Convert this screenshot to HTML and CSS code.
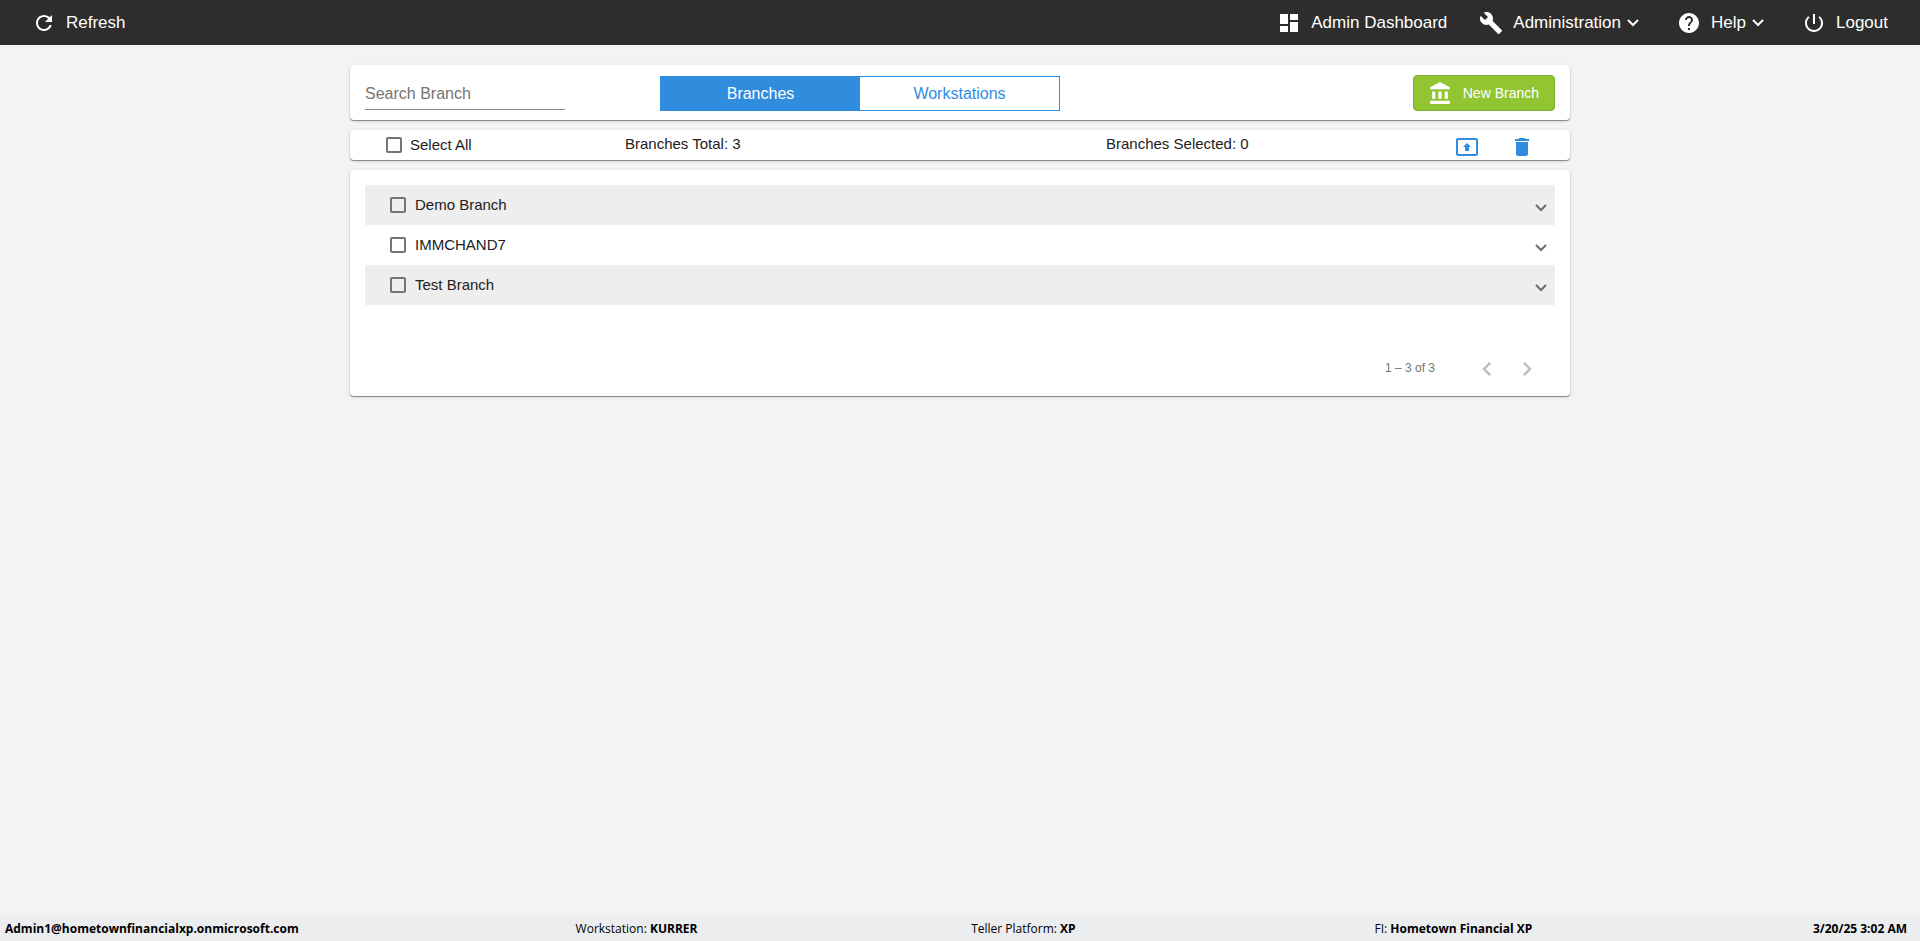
FILE: index.html
```
<!DOCTYPE html>
<html lang="en">
  <head>
    <meta charset="UTF-8" />
    <title>Branches</title>
    <link rel="stylesheet" href="styles.css">
  </head>
  <body>
    <header class="topbar">
      <button type="button" class="nav-item">
        <svg class="nav-icon" viewBox="0 0 24 24"><path d="M17.65 6.35C16.2 4.9 14.21 4 12 4c-4.42 0-7.99 3.58-7.99 8s3.57 8 7.99 8c3.73 0 6.84-2.55 7.73-6h-2.08c-.82 2.33-3.04 4-5.65 4-3.31 0-6-2.69-6-6s2.69-6 6-6c1.66 0 3.14.69 4.22 1.78L13 11h7V4l-2.35 2.35z"/></svg>
        Refresh
      </button>
      <nav class="nav">
        <a href="#dashboard" class="nav-item nav-dashboard">
          <svg class="nav-icon" viewBox="0 0 24 24"><path d="M3 13h8V3H3v10zm0 8h8v-6H3v6zm10 0h8V11h-8v10zm0-18v6h8V3h-8z"/></svg>
          Admin Dashboard
        </a>
        <button type="button" class="nav-item nav-administration">
          <svg class="nav-icon" viewBox="0 0 24 24"><path d="M22.7 19l-9.1-9.1c.9-2.3.4-5-1.5-6.9-2-2-5-2.4-7.4-1.3L9 6 6 9 1.6 4.7C.4 7.1.9 10.1 2.9 12.1c1.9 1.9 4.6 2.4 6.9 1.5l9.1 9.1c.4.4 1 .4 1.4 0l2.3-2.3c.5-.4.5-1.1.1-1.4z"/></svg>
          Administration
          <svg class="nav-arrow" viewBox="0 0 12 8"><path d="M1 1l5 5 5-5"/></svg>
        </button>
        <button type="button" class="nav-item nav-help">
          <svg class="nav-icon" viewBox="0 0 24 24"><path d="M12 2C6.48 2 2 6.48 2 12s4.48 10 10 10 10-4.48 10-10S17.52 2 12 2zm1 17h-2v-2h2v2zm2.07-7.75l-.9.92C13.45 12.9 13 13.5 13 15h-2v-.5c0-1.1.45-2.1 1.17-2.83l1.24-1.26c.37-.36.59-.86.59-1.41 0-1.1-.9-2-2-2s-2 .9-2 2H8c0-2.21 1.79-4 4-4s4 1.79 4 4c0 .88-.36 1.68-.93 2.25z"/></svg>
          Help
          <svg class="nav-arrow" viewBox="0 0 12 8"><path d="M1 1l5 5 5-5"/></svg>
        </button>
        <button type="button" class="nav-item">
          <svg class="nav-icon" viewBox="0 0 24 24"><path d="M13 3h-2v10h2V3zm4.83 2.17l-1.42 1.42C17.99 7.86 19 9.81 19 12c0 3.87-3.13 7-7 7s-7-3.13-7-7c0-2.19 1.01-4.14 2.58-5.42L6.17 5.17C4.23 6.82 3 9.26 3 12c0 4.97 4.03 9 9 9s9-4.03 9-9c0-2.74-1.23-5.18-3.17-6.83z"/></svg>
          Logout
        </button>
      </nav>
    </header>

    <main class="content">
      <section class="card toolbar">
        <input type="text" class="search" placeholder="Search Branch" aria-label="Search Branch" />
        <div class="toggle">
          <button type="button" class="toggle-btn active">Branches</button>
          <button type="button" class="toggle-btn">Workstations</button>
        </div>
        <button type="button" class="new-branch">
          <svg class="new-branch-icon" viewBox="0 0 24 24"><path d="M4 10v7h3v-7H4zm6 0v7h3v-7h-3zM2 22h19v-3H2v3zm14-12v7h3v-7h-3zm-4.500-9L2 6v2h19V6l-9.500-5z"/></svg>
          New Branch
        </button>
      </section>

      <section class="card summary">
        <label class="check"><input type="checkbox" /><span>Select All</span></label>
        <span class="total">Branches Total: 3</span>
        <span class="selected">Branches Selected: 0</span>
        <div class="actions">
          <button type="button" class="icon-btn" aria-label="Export">
            <svg viewBox="0 0 24 24"><path d="M21 3H3c-1.110 0-2 .89-2 2v14c0 1.110.89 2 2 2h18c1.110 0 2-.89 2-2V5c0-1.110-.89-2-2-2zm0 16.020H3V4.980h18v14.040zM10 12H8l4-4 4 4h-2v4h-4v-4z"/></svg>
          </button>
          <button type="button" class="icon-btn" aria-label="Delete">
            <svg viewBox="0 0 24 24"><path d="M6 19c0 1.100.9 2 2 2h8c1.100 0 2-.9 2-2V7H6v12zM19 4h-3.500l-1-1h-5l-1 1H5v2h14V4z"/></svg>
          </button>
        </div>
      </section>

      <section class="card list">
        <ul class="branches">
          <li class="branch">
            <label class="check"><input type="checkbox" /><span>Demo Branch</span></label>
            <button type="button" class="expand" aria-label="Expand Demo Branch"><svg viewBox="0 0 12 8"><path d="M1 1l5 5 5-5"/></svg></button>
          </li>
          <li class="branch">
            <label class="check"><input type="checkbox" /><span>IMMCHAND7</span></label>
            <button type="button" class="expand" aria-label="Expand IMMCHAND7"><svg viewBox="0 0 12 8"><path d="M1 1l5 5 5-5"/></svg></button>
          </li>
          <li class="branch">
            <label class="check"><input type="checkbox" /><span>Test Branch</span></label>
            <button type="button" class="expand" aria-label="Expand Test Branch"><svg viewBox="0 0 12 8"><path d="M1 1l5 5 5-5"/></svg></button>
          </li>
        </ul>
        <div class="paginator">
          <span class="range">1 – 3 of 3</span>
          <button type="button" class="page-btn" aria-label="Previous page" disabled>
            <svg viewBox="0 0 24 24"><path d="M15.410 7.410L14 6l-6 6 6 6 1.410-1.410L10.830 12z"/></svg>
          </button>
          <button type="button" class="page-btn" aria-label="Next page" disabled>
            <svg viewBox="0 0 24 24"><path d="M10 6L8.590 7.410 13.170 12l-4.580 4.590L10 18l6-6z"/></svg>
          </button>
        </div>
      </section>
    </main>

    <footer class="statusbar">
      <b>Admin1@hometownfinancialxp.onmicrosoft.com</b>
      <span>Workstation: <b>KURRER</b></span>
      <span>Teller Platform: <b>XP</b></span>
      <span>FI: <b>Hometown Financial XP</b></span>
      <b class="time">3/20/25 3:02 AM</b>
    </footer>
  </body>
</html>
```
FILE: styles.css
```
* {
  box-sizing: border-box;
}
body {
  display: flex;
  flex-direction: column;
  min-height: 100vh;
  margin: 0;
  background-color: #f3f3f3;
  color: #212121;
  font-family: "Liberation Sans", Arial, sans-serif;
  font-size: 15px;
}
button {
  padding: 0;
  border: none;
  background: none;
  font-family: inherit;
  cursor: pointer;
}
svg {
  display: block;
  fill: currentColor;
}

/* top bar */
.topbar {
  display: flex;
  justify-content: space-between;
  height: 45px;
  padding: 0 32px;
  background-color: #2d2d2d;
}
.nav {
  display: flex;
}
.nav-item {
  display: flex;
  align-items: center;
  color: #fff;
  font-size: 17px;
  line-height: 20px;
  text-decoration: none;
}
.nav-icon {
  width: 24px;
  height: 24px;
  margin-right: 10px;
}
.nav-dashboard {
  margin-right: 32px;
}
.nav-administration,
.nav-help {
  margin-right: 38px;
}
.nav-arrow {
  width: 12px;
  height: 8px;
  margin-left: 6px;
  fill: none;
  stroke: currentColor;
  stroke-width: 2;
}

/* cards */
.content {
  flex: 1;
  display: flex;
  flex-direction: column;
  gap: 10px;
  width: 100%;
  max-width: 1220px;
  margin: 0 auto;
  padding: 20px 0;
}
.card {
  background-color: #fff;
  border-radius: 4px;
  box-shadow: 0 1px 1px rgba(0, 0, 0, 0.4), 0 1px 3px rgba(0, 0, 0, 0.15);
}
.toolbar {
  display: flex;
  align-items: center;
  padding: 10px 15px 9px;
}
.search {
  width: 200px;
  height: 34px;
  padding: 3px 0 1px;
  border: none;
  border-bottom: 1px solid #8c8c8c;
  background: none;
  font-family: inherit;
  font-size: 16px;
  outline: none;
}
.search::placeholder {
  color: #757575;
}
.toggle {
  display: flex;
  width: 400px;
  margin-left: 95px;
  border: 1px solid #308ddd;
}
.toggle-btn {
  flex: 1;
  height: 33px;
  padding-top: 2px;
  color: #308ddd;
  font-size: 16px;
}
.toggle-btn.active {
  background-color: #308ddd;
  color: #fff;
}
.new-branch {
  display: flex;
  align-items: center;
  height: 36px;
  margin-left: auto;
  padding: 0 15px 0 14px;
  border: 1px solid #7ab030;
  border-radius: 4px;
  background-color: #91c532;
  color: #fff;
  font-size: 14px;
}
.new-branch-icon {
  width: 25px;
  height: 25px;
  margin-right: 10px;
}

.check {
  display: flex;
  align-items: center;
  gap: 9px;
}
.check input {
  appearance: none;
  width: 16px;
  height: 16px;
  margin: 0;
  border: 2px solid #757575;
  border-radius: 2px;
}
.check input:checked {
  background-color: #308ddd;
}
.check span {
  padding-bottom: 2px;
}
.summary {
  display: grid;
  grid-template-columns: 239px 481px 1fr auto;
  align-items: center;
  height: 30px;
  padding: 0 36px;
}
.summary .check {
  gap: 8px;
}
.total,
.selected {
  padding-bottom: 4px;
}
.actions {
  display: flex;
  gap: 31px;
  padding-top: 4px;
}
.icon-btn {
  color: #308ddd;
}
.icon-btn svg {
  width: 24px;
  height: 24px;
}

/* branch list */
.list {
  padding: 15px 15px 7px;
}
.branches {
  margin: 0;
  padding: 0;
  list-style: none;
}
.branch {
  display: flex;
  align-items: center;
  justify-content: space-between;
  height: 40px;
  padding: 0 8px 0 25px;
}
.branch:nth-child(odd) {
  background-color: #eee;
}
.expand {
  padding-top: 6px;
  color: #6e6e6e;
}
.expand svg {
  width: 12px;
  height: 8px;
  fill: none;
  stroke: currentColor;
  stroke-width: 2;
}
.paginator {
  display: flex;
  align-items: center;
  justify-content: flex-end;
  margin-top: 44px;
  padding-right: 8px;
}
.range {
  margin-right: 32px;
  padding-bottom: 2px;
  color: #757575;
  font-size: 12px;
}
.page-btn {
  width: 40px;
  height: 40px;
  color: #bdbdbd;
}
.page-btn svg {
  width: 28px;
  height: 28px;
  margin: 0 auto;
}

/* status bar */
.statusbar {
  display: grid;
  grid-template-columns: 300fr 208fr 212fr 140fr 140fr;
  align-items: center;
  height: 26px;
  padding: 0 13px 0 5px;
  background-color: #ebedef;
  color: #000;
  font-family: "Segoe UI", "Open Sans", sans-serif;
  font-size: 12px;
}
.time {
  text-align: right;
}
```
